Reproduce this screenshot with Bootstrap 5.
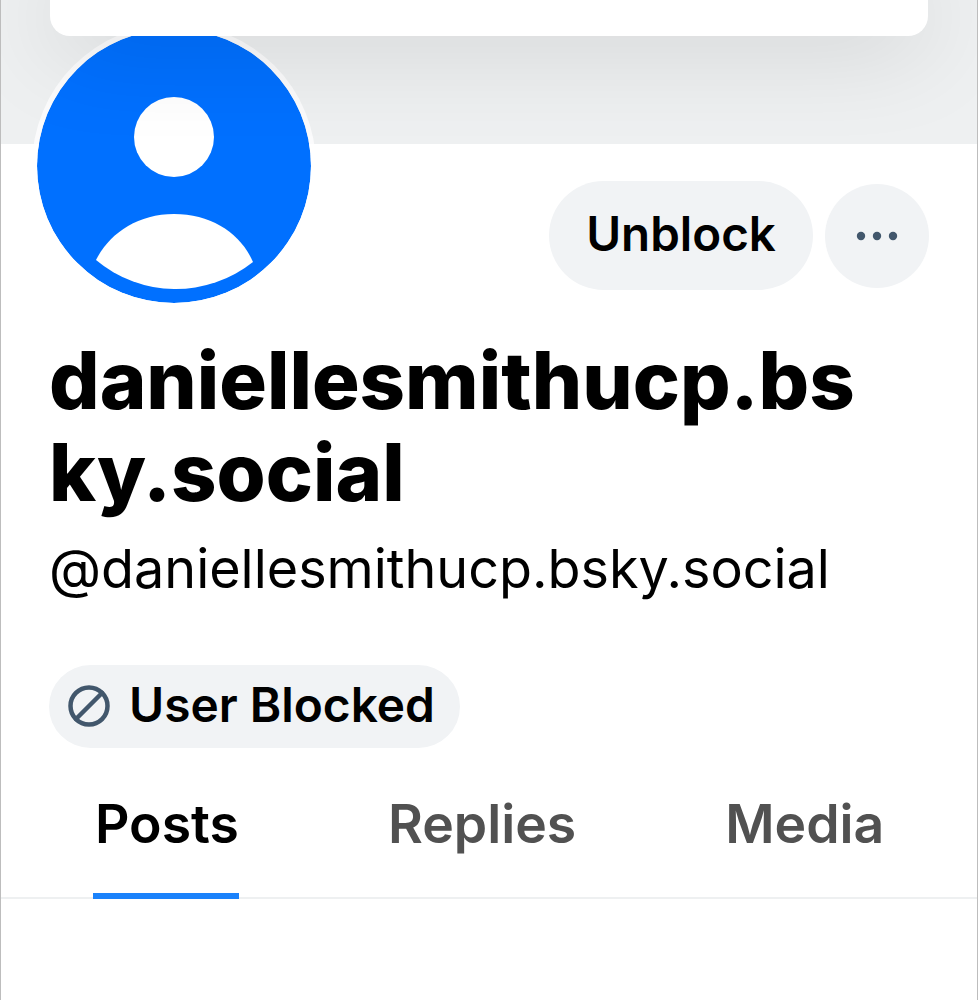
<!DOCTYPE html>
<html lang="en">

<head>
    <meta charset="UTF-8">
    <title>danielle smith profile</title>
    <link href="https://cdn.jsdelivr.net/npm/bootstrap@5.3.0/dist/css/bootstrap.min.css" rel="stylesheet">
    <style>
        body {
            font-family: Inter, "Liberation Sans", sans-serif;
            background-color: #fff;
            color: #000;
        }

        .page-frame {
            height: 1000px;
            overflow: hidden;
            border-left: 1px solid #bdbdbd;
            border-right: 1px solid #bdbdbd;
        }

        .banner-area {
            height: 144px;
            padding: 0 49px;
            overflow: hidden;
            background-color: #eef0f1;
        }

        .top-sheet {
            position: relative;
            z-index: 2;
            height: 36px;
            background-color: #fff;
            border-radius: 0 0 20px 20px;
            box-shadow: 0 0 100px rgba(0, 0, 0, 0.22);
        }

        .profile-top {
            padding: 0 48px 0 36px;
        }

        .avatar-pic {
            position: relative;
            z-index: 1;
            width: 274px;
            height: 274px;
            margin-top: -115px;
            border-radius: 50%;
            box-shadow: 0 0 0 5px rgba(255, 255, 255, 0.75);
        }

        .action-row {
            margin-top: 37px;
            height: 109px;
        }

        .pill-btn {
            width: 264px;
            height: 109px;
            padding: 0 0 4px 0;
            border: 0;
            border-radius: 55px;
            background-color: #f1f3f5;
            font-size: 47.5px;
            font-weight: 600;
            color: #000;
        }

        .more-btn {
            width: 104px;
            height: 104px;
            border: 0;
            border-radius: 50%;
            background-color: #f1f3f5;
        }

        .profile-info {
            padding: 0 48px;
        }

        .display-name {
            max-width: 830px;
            margin: 31px 0 0 0;
            font-size: 79.4px;
            line-height: 92px;
            font-weight: 800;
            word-break: break-all;
        }

        .handle-text {
            margin: 19px 0 0 0;
            font-size: 53.9px;
            line-height: 64px;
        }

        .blocked-tag {
            width: 411px;
            height: 83px;
            margin-top: 64px;
            padding: 0 0 2px 19px;
            gap: 19px;
            border-radius: 42px;
            background-color: #f1f3f5;
            font-size: 47.8px;
            font-weight: 600;
        }

        .tab-bar {
            height: 123px;
            margin-top: 28px;
            padding-left: 92px;
            gap: 149px;
            border-bottom: 2px solid #eef0f1;
        }

        .tab-item {
            height: 123px;
            padding-top: 10px;
            font-size: 53.5px;
            line-height: 76px;
            font-weight: 600;
            color: #515151;
        }

        .tab-item.is-on {
            padding-left: 2px;
            color: #000;
            border-bottom: 6px solid #1a82fb;
        }
    </style>
</head>

<body>
    <div class="page-frame">
        <div class="banner-area">
            <div class="top-sheet"></div>
        </div>

        <div class="profile-top d-flex justify-content-between align-items-start">
            <svg class="avatar-pic" viewBox="0 0 274 274">
                <circle cx="137" cy="137" r="137" fill="#0070ff" />
                <circle cx="137" cy="108" r="40" fill="#fff" />
                <path d="M59 231C72 205 100 185 137 185C175 185 204 205 216 233A124 124 0 0 1 59 231Z" fill="#fff" />
            </svg>
            <div class="action-row d-flex align-items-center gap-2">
                <button class="pill-btn me-1" type="button">Unblock</button>
                <button class="more-btn d-flex align-items-center justify-content-center" type="button" aria-label="More">
                    <svg width="42" height="10" viewBox="0 0 42 10">
                        <circle cx="5" cy="5" r="4.2" fill="#42576c" />
                        <circle cx="21" cy="5" r="4.2" fill="#42576c" />
                        <circle cx="37" cy="5" r="4.2" fill="#42576c" />
                    </svg>
                </button>
            </div>
        </div>

        <div class="profile-info">
            <h1 class="display-name">daniellesmithucp.bsky.social</h1>
            <p class="handle-text">@daniellesmithucp.bsky.social</p>
            <div class="blocked-tag d-flex align-items-center">
                <svg width="42" height="42" viewBox="0 0 42 42" fill="none" stroke="#42576c" stroke-width="4.5" stroke-linecap="round">
                    <circle cx="21" cy="21" r="18.5" />
                    <path d="M8 34L34 8" />
                </svg>
                <span>User Blocked</span>
            </div>
        </div>

        <div class="tab-bar d-flex">
            <div class="tab-item is-on">Posts</div>
            <div class="tab-item">Replies</div>
            <div class="tab-item">Media</div>
        </div>
    </div>
</body>

</html>
